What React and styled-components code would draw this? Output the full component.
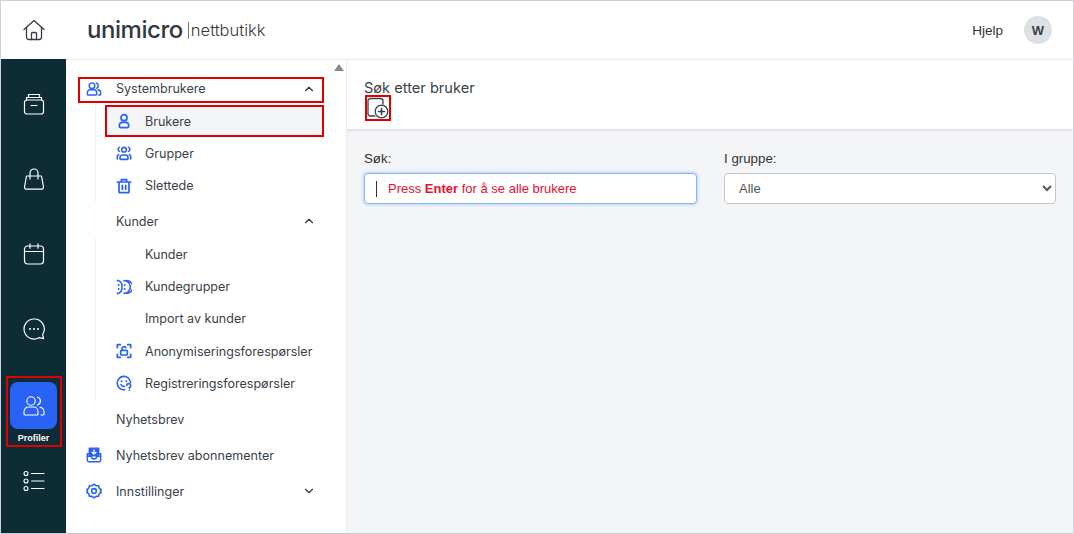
import React from 'react';
import styled, { createGlobalStyle } from 'styled-components';

const GlobalStyle = createGlobalStyle`
  html, body {
    margin: 0;
    padding: 0;
    background: #fff;
  }
  * {
    box-sizing: border-box;
  }
`;

const Page = styled.div`
  width: 1074px;
  height: 534px;
  display: grid;
  grid-template-rows: 58px 1fr;
  border: 1px solid #ccd3da;
  border-bottom-color: #c9ced4;
  overflow: hidden;
  font-family: Inter, 'Noto Sans', sans-serif;
  color: #333c46;
`;

const TopBar = styled.header`
  display: flex;
  align-items: center;
  background: #fff;
`;

const HomeSlot = styled.div`
  width: 65px;
  display: flex;
  justify-content: center;
  color: #333c46;
`;

const Logo = styled.div`
  margin-left: 21px;
  display: flex;
  align-items: center;
  color: #33383d;
`;

const LogoMark = styled.span`
  font-size: 24px;
  font-weight: 500;
  letter-spacing: -0.45px;
  line-height: 30px;
`;

const LogoName = styled.span`
  margin-left: 5px;
  padding-left: 2px;
  border-left: 1px solid #777;
  font-size: 16.5px;
  font-weight: 300;
  line-height: 17px;
`;

const TopRight = styled.div`
  margin-left: auto;
  margin-right: 21px;
  display: flex;
  align-items: center;
  gap: 21px;
`;

const Help = styled.span`
  font-family: 'Liberation Sans', Arial, sans-serif;
  font-size: 13.5px;
  color: #333;
`;

const Avatar = styled.div`
  width: 28px;
  height: 28px;
  border-radius: 50%;
  background: #dde1e6;
  display: flex;
  align-items: center;
  justify-content: center;
  font-family: 'Liberation Sans', Arial, sans-serif;
  font-size: 13px;
  font-weight: 700;
  color: #3a4148;
`;

const Body = styled.div`
  display: grid;
  grid-template-columns: 65px 281px 1fr;
  min-height: 0;
`;

const Rail = styled.nav`
  background: #0e2c35;
  display: flex;
  flex-direction: column;
  align-items: center;
  padding-top: 7px;
  color: #fff;
`;

const RailItem = styled.div`
  height: 75px;
  flex: none;
  display: flex;
  align-items: center;
  justify-content: center;
`;

const RailActive = styled.div`
  margin-top: 10px;
  width: 56px;
  height: 71px;
  flex: none;
  border: 2px solid #e00000;
  display: flex;
  flex-direction: column;
  align-items: center;
  padding-top: 4px;
`;

const RailBadge = styled.div`
  width: 47px;
  height: 47px;
  border-radius: 8px;
  background: #2b62f6;
  display: flex;
  align-items: center;
  justify-content: center;
`;

const RailLabel = styled.div`
  margin-top: 3px;
  font-family: 'Liberation Sans', Arial, sans-serif;
  font-size: 9px;
  font-weight: 700;
  line-height: 12px;
`;

const RailLast = styled(RailItem)`
  margin-top: -4px;
`;

const Sidebar = styled.aside`
  position: relative;
  background: #fff;
  border-top: 1px solid #eceef0;
  border-right: 1px solid #e9ebee;
  padding-top: 10px;
  font-size: 12.55px;
`;

const ScrollArrow = styled.div`
  position: absolute;
  top: 4px;
  right: 2px;
  width: 0;
  height: 0;
  border-left: 5px solid transparent;
  border-right: 5px solid transparent;
  border-bottom: 7px solid #8a8a8a;
`;

const TopRow = styled.div`
  height: 36px;
  display: flex;
  align-items: center;
  padding-left: 12px;
  padding-right: 8px;
  margin-left: 8px;
  width: 250px;
`;

const FramedTopRow = styled(TopRow)`
  height: 26px;
  margin-top: 7px;
  margin-bottom: 3px;
  margin-left: 12px;
  width: 246px;
  padding: 0 6px 3px 6px;
  border: 2px solid #e00000;
`;

const RowIcon = styled.span`
  width: 16px;
  height: 16px;
  flex: none;
  display: flex;
  color: #2b62f6;
`;

const RowText = styled.span`
  margin-left: 14px;
  white-space: nowrap;
  color: #39424c;
`;

const Caret = styled.span`
  margin-left: auto;
  display: flex;
  color: #33383d;
`;

const SubList = styled.div`
  margin: -1px 0 1.5px 29px;
  border-left: 1px solid #f0f1f3;
  padding-left: 9px;
`;

const SubRow = styled.div`
  height: 32.25px;
  width: 219px;
  display: flex;
  align-items: center;
  padding-left: 11px;
  ${(p) => p.$framed && 'background: #f4f5f7; border: 2px solid #e00000; padding-left: 9px;'}
`;

const SubText = styled.span`
  margin-left: 13px;
  white-space: nowrap;
  color: #39424c;
`;

const Main = styled.main`
  background: #f4f5f7;
  min-width: 0;
`;

const MainHeader = styled.div`
  height: 70px;
  background: #fff;
  border-top: 1px solid #eceef0;
  box-shadow: 0 1px 3px rgba(0, 0, 0, 0.14);
  padding: 20px 0 0 17px;
`;

const Title = styled.h1`
  margin: 0;
  font-size: 14.6px;
  font-weight: 400;
  line-height: 17px;
  color: #3b4148;
`;

const AddButton = styled.button`
  width: 26px;
  height: 26px;
  margin-top: -2px;
  margin-left: 1px;
  padding: 0;
  display: flex;
  align-items: center;
  justify-content: center;
  background: none;
  border: 2px solid #e00000;
  color: #35424c;
`;

const Filters = styled.form`
  display: grid;
  grid-template-columns: 333px 332px;
  column-gap: 27px;
  padding: 22px 0 0 17px;
`;

const Field = styled.label`
  display: block;
  font-family: 'Liberation Sans', Arial, sans-serif;
  font-size: 13.3px;
  line-height: 16px;
  color: #333;
`;

const FakeInput = styled.div`
  margin-top: 6px;
  height: 31px;
  background: #fff;
  border: 1px solid #86b7fe;
  border-radius: 4px;
  box-shadow: 0 0 3px 1px rgba(13, 110, 253, 0.25);
  display: flex;
  align-items: center;
  padding-left: 11px;
  color: #e8102c;
`;

const Cursor = styled.span`
  width: 1px;
  height: 16px;
  margin-right: 11px;
  background: #333;
`;

const Hint = styled.span`
  font-size: 13px;
`;

const Select = styled.select`
  display: block;
  margin-top: 6px;
  width: 100%;
  height: 31px;
  background: #fff;
  border: 1px solid #c4c8cc;
  border-radius: 4px;
  padding-left: 10px;
  font-family: 'Liberation Sans', Arial, sans-serif;
  font-size: 13px;
  color: #555;
`;

const Svg = ({ size = 16, children, width = 1.5 }) => (
  <svg width={size} height={size} viewBox="0 0 24 24" fill="none" stroke="currentColor" strokeWidth={width} strokeLinecap="round" strokeLinejoin="round">
    {children}
  </svg>
);

const HomeIcon = () => (
  <Svg size={24} width={1.3}>
    <path d="M2 11.500 12 2.500l10 9" />
    <path d="M4.500 9.500V19a2.500 2.500 0 0 0 2.500 2.500h10a2.500 2.500 0 0 0 2.500-2.500V9.500" />
    <path d="M9.500 21.500v-6a1 1 0 0 1 1-1h3a1 1 0 0 1 1 1v6" />
  </Svg>
);

const ArchiveIcon = () => (
  <Svg size={24} width={1.2}>
    <rect x="2.500" y="8" width="19" height="14" rx="2.500" />
    <path d="M4.500 8V5.500h15V8M6.500 5.500V2.500h11v3M9 13.500h6" />
  </Svg>
);

const BagIcon = () => (
  <Svg size={24} width={1.2}>
    <path d="M4.500 9h15l2 11a2 2 0 0 1-2 2.200H4.500a2 2 0 0 1-2-2.200z" />
    <path d="M8 12V6a4 4 0 0 1 8 0v6" />
  </Svg>
);

const CalendarIcon = () => (
  <Svg size={24} width={1.2}>
    <rect x="2.500" y="4" width="19" height="18" rx="3" />
    <path d="M2.500 9.500h19M8 1.800v4.400M16 1.800v4.400" />
  </Svg>
);

const ChatIcon = () => (
  <Svg size={24} width={1.2}>
    <path d="M12 2a10 10 0 1 0 5 18.700l4.600 1-1-4.200A10 10 0 0 0 12 2z" />
    <path d="M8 12h.01M12 12h.01M16 12h.01" strokeWidth={2} />
  </Svg>
);

const PeopleIcon = () => (
  <Svg size={24} width={1.1}>
    <circle cx="9" cy="7" r="4.200" />
    <path d="M15.500 3a4.200 4.200 0 0 1 0 8" />
    <path d="M2 20v-2.500A4.500 4.500 0 0 1 6.500 13h5a4.500 4.500 0 0 1 4.500 4.500V20a1 1 0 0 1-1 1H3a1 1 0 0 1-1-1z" />
    <path d="M18 13.200a4.500 4.500 0 0 1 4 4.300V20a1 1 0 0 1-1 1h-2" />
  </Svg>
);

const ListIcon = () => (
  <Svg size={24} width={1.1}>
    <circle cx="4" cy="4.500" r="2" />
    <circle cx="4" cy="12" r="2" />
    <circle cx="4" cy="19.500" r="2" />
    <path d="M9.500 4.500H22M9.500 12H22M9.500 19.500H22" />
  </Svg>
);

const BluePeople = () => (
  <Svg width={2.2}>
    <circle cx="9" cy="7" r="4.200" />
    <path d="M15.500 3a4.200 4.200 0 0 1 0 8" />
    <path d="M2 20v-2.500A4.500 4.500 0 0 1 6.500 13h5a4.500 4.500 0 0 1 4.500 4.500V20a1 1 0 0 1-1 1H3a1 1 0 0 1-1-1z" />
    <path d="M18 13.200a4.500 4.500 0 0 1 4 4.300V20a1 1 0 0 1-1 1h-2" />
  </Svg>
);

const UserIcon = () => (
  <Svg width={2.6}>
    <circle cx="12" cy="7" r="4.500" />
    <path d="M5 18.500a4.500 4.500 0 0 1 4.500-4.500h5a4.500 4.500 0 0 1 4.500 4.500V20a2 2 0 0 1-2 2H7a2 2 0 0 1-2-2z" />
  </Svg>
);

const GroupIcon = () => (
  <Svg width={2.4}>
    <circle cx="12" cy="7" r="3.500" />
    <path d="M6 19a4 4 0 0 1 4-4h4a4 4 0 0 1 4 4v1.500a1 1 0 0 1-1 1H7a1 1 0 0 1-1-1z" />
    <path d="M5 3.500a3.500 3.500 0 0 0 0 6M19 3.500a3.500 3.500 0 0 1 0 6M2 21v-4a3 3 0 0 1 2-2.500M22 21v-4a3 3 0 0 0-2-2.500" />
  </Svg>
);

const TrashIcon = () => (
  <Svg width={2.6}>
    <path d="M2 6h20M8 6V2.500h8V6M4.500 6v15a1 1 0 0 0 1 1h13a1 1 0 0 0 1-1V6M9.500 11v6M14.500 11v6" />
  </Svg>
);

const SegmentIcon = () => (
  <Svg width={2.4}>
    <path d="M2 2.500h2a9.500 9.500 0 0 1 5 9.500 9.500 9.500 0 0 1-5 9.500H2" />
    <path d="M12 2.500a9.500 9.500 0 0 1 0 19M16 2.500a9.500 9.500 0 0 1 0 19" />
    <path d="M4 9h.01M4 15h.01M13 9h.01M13 15h.01" strokeWidth={3} />
  </Svg>
);

const LockScanIcon = () => (
  <Svg width={2.6}>
    <path d="M2 7V2.500h4.500M17.500 2.500H22V7M22 17v4.500h-4.500M6.500 21.500H2V17" />
    <rect x="7" y="11" width="10" height="7" rx="1.500" />
    <path d="M9 11V8.500a3 3 0 0 1 5.600-1.500" />
  </Svg>
);

const FaceIcon = () => (
  <Svg width={2.4}>
    <path d="M21.800 11A10 10 0 1 0 13 22" />
    <path d="M8.500 9.500h.01M15.500 9.500h.01" strokeWidth={3} />
    <path d="M7.500 14.500a5 5 0 0 0 5 2.500" />
    <path d="M16 16a3 3 0 1 1 4 2.800V20M20 23h.01" />
  </Svg>
);

const InboxIcon = () => (
  <Svg width={2.2}>
    <path d="M5 10H2v10a2 2 0 0 0 2 2h16a2 2 0 0 0 2-2V10h-3" />
    <path d="M2 14h6a4 4 0 0 0 8 0h6" />
    <path d="M5 13V2h14v11z" fill="currentColor" />
    <path d="M12 4.500v6M9 8l3 2.500L15 8" stroke="#fff" strokeWidth={2} />
  </Svg>
);

const GearIcon = () => (
  <Svg width={2.4}>
    <path d="M12 1.800l3 2.200 3.800.1 1 3.500 3 2.400-1.200 2 1.200 2-3 2.400-1 3.500-3.800.1-3 2.200-3-2.200-3.800-.1-1-3.500-3-2.400 1.200-2-1.200-2 3-2.400 1-3.500L9 4z" />
    <circle cx="12" cy="12" r="3.500" />
  </Svg>
);

const ChevronUp = () => (
  <Svg size={14} width={2}><path d="M6 15l6-6 6 6" /></Svg>
);

const ChevronDown = () => (
  <Svg size={14} width={2}><path d="M6 9l6 6 6-6" /></Svg>
);

const AddIcon = () => (
  <svg width="22" height="22" viewBox="0 0 22 22" fill="none" stroke="currentColor" strokeWidth="1.300" strokeLinecap="round">
    <path d="M8 19H3.500A2.500 2.500 0 0 1 1 16.500V4a2.500 2.500 0 0 1 2.500-2.500h10A2.500 2.500 0 0 1 16 4v3" />
    <circle cx="14.500" cy="14.500" r="6.300" />
    <path d="M14.500 11.500v6M11.500 14.500h6" strokeWidth="1.600" />
  </svg>
);

const firstGroup = [
  { label: 'Grupper', icon: <GroupIcon /> },
  { label: 'Slettede', icon: <TrashIcon /> },
];

const secondGroup = [
  { label: 'Kunder' },
  { label: 'Kundegrupper', icon: <SegmentIcon /> },
  { label: 'Import av kunder' },
  { label: 'Anonymiseringsforespørsler', icon: <LockScanIcon /> },
  { label: 'Registreringsforespørsler', icon: <FaceIcon /> },
];

const SubItem = ({ label, icon, framed }) => (
  <SubRow $framed={framed}>
    {icon ? <RowIcon>{icon}</RowIcon> : <RowIcon />}
    <SubText>{label}</SubText>
  </SubRow>
);

const App = () => (
  <>
    <GlobalStyle />
    <Page>
      <TopBar>
        <HomeSlot><HomeIcon /></HomeSlot>
        <Logo>
          <LogoMark>unimicro</LogoMark>
          <LogoName>nettbutikk</LogoName>
        </Logo>
        <TopRight>
          <Help>Hjelp</Help>
          <Avatar>W</Avatar>
        </TopRight>
      </TopBar>
      <Body>
        <Rail>
          <RailItem><ArchiveIcon /></RailItem>
          <RailItem><BagIcon /></RailItem>
          <RailItem><CalendarIcon /></RailItem>
          <RailItem><ChatIcon /></RailItem>
          <RailActive>
            <RailBadge><PeopleIcon /></RailBadge>
            <RailLabel>Profiler</RailLabel>
          </RailActive>
          <RailLast><ListIcon /></RailLast>
        </Rail>
        <Sidebar>
          <ScrollArrow />
          <FramedTopRow>
            <RowIcon><BluePeople /></RowIcon>
            <RowText>Systembrukere</RowText>
            <Caret><ChevronUp /></Caret>
          </FramedTopRow>
          <SubList>
            <SubItem label="Brukere" icon={<UserIcon />} framed />
            {firstGroup.map((item) => (
              <SubItem key={item.label} {...item} />
            ))}
          </SubList>
          <TopRow>
            <RowIcon />
            <RowText>Kunder</RowText>
            <Caret><ChevronUp /></Caret>
          </TopRow>
          <SubList>
            {secondGroup.map((item) => (
              <SubItem key={item.label} {...item} />
            ))}
          </SubList>
          <TopRow>
            <RowIcon />
            <RowText>Nyhetsbrev</RowText>
          </TopRow>
          <TopRow>
            <RowIcon><InboxIcon /></RowIcon>
            <RowText>Nyhetsbrev abonnementer</RowText>
          </TopRow>
          <TopRow>
            <RowIcon><GearIcon /></RowIcon>
            <RowText>Innstillinger</RowText>
            <Caret><ChevronDown /></Caret>
          </TopRow>
        </Sidebar>
        <Main>
          <MainHeader>
            <Title>Søk etter bruker</Title>
            <AddButton type="button" aria-label="Ny bruker"><AddIcon /></AddButton>
          </MainHeader>
          <Filters>
            <Field>
              Søk:
              <FakeInput>
                <Cursor />
                <Hint>Press <b>Enter</b> for å se alle brukere</Hint>
              </FakeInput>
            </Field>
            <Field>
              I gruppe:
              <Select defaultValue="Alle">
                <option>Alle</option>
              </Select>
            </Field>
          </Filters>
        </Main>
      </Body>
    </Page>
  </>
);

export default App;
